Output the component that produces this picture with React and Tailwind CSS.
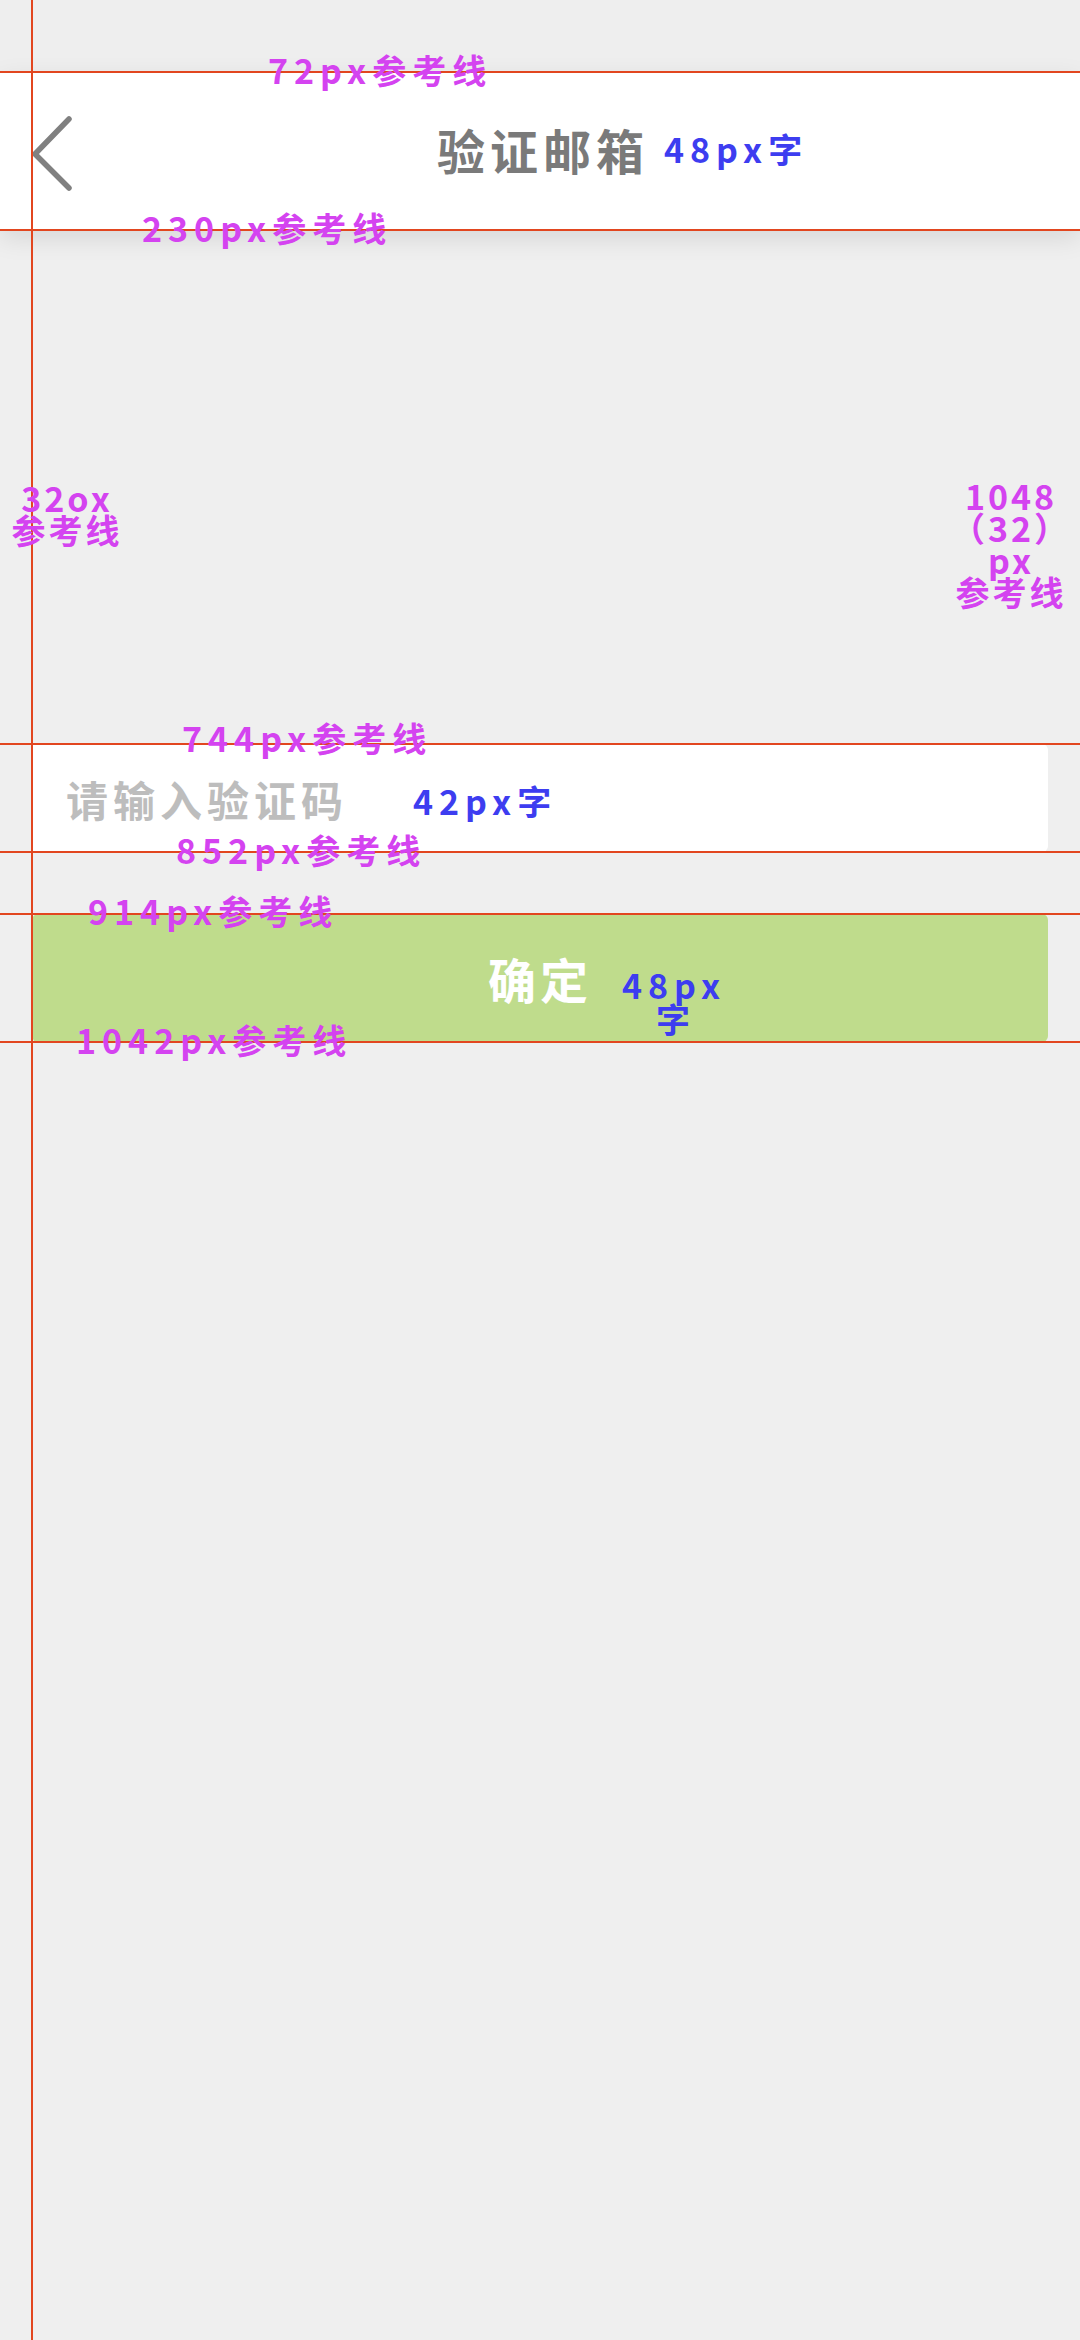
import React from 'react';

const cjk = { fontFamily: '"Noto Sans CJK SC", "Noto Sans", sans-serif' };

// design-spec overlay: guide lines + size labels
const guideRows = [72, 230, 744, 852, 914, 1042];

const labels = [
  { text: '72px参考线', left: 268, top: 52, color: 'text-[#d443f0]' },
  { text: '230px参考线', left: 142, top: 210, color: 'text-[#d443f0]' },
  { text: '48px字', left: 664, top: 131, color: 'text-[#3d3df0]' },
  { text: '744px参考线', left: 182, top: 720, color: 'text-[#d443f0]' },
  { text: '42px字', left: 413, top: 783, color: 'text-[#3d3df0]' },
  { text: '852px参考线', left: 176, top: 832, color: 'text-[#d443f0]' },
  { text: '914px参考线', left: 88, top: 893, color: 'text-[#d443f0]' },
  { text: '1042px参考线', left: 76, top: 1022, color: 'text-[#d443f0]' },
];

function Overlay() {
  return (
    <div className="pointer-events-none absolute inset-0 z-20" style={cjk}>
      {guideRows.map((y) => (
        <div key={y} className="absolute left-0 right-0 h-[2px] bg-[#e2461f]" style={{ top: y - 1 }} />
      ))}
      <div className="absolute top-0 bottom-0 left-[31px] w-[2px] bg-[#e2461f]" />

      {labels.map((l) => (
        <div
          key={l.text}
          className={`absolute text-[34px] font-bold leading-[36px] tracking-[6px] whitespace-nowrap ${l.color}`}
          style={{ left: l.left, top: l.top }}
        >
          {l.text}
        </div>
      ))}

      {/* button size note, wrapped in the source */}
      <div className="absolute left-[622px] top-[968px] w-[110px] text-[34px] font-bold leading-[34px] text-[#3d3df0]">
        <div className="tracking-[6px]">48px</div>
        <div className="pl-[34px]">字</div>
      </div>

      <div className="absolute left-[2px] top-[482px] w-[130px] text-center text-[34px] font-bold leading-[32px] tracking-[3px] text-[#d443f0]">
        <div>32ox</div>
        <div>参考线</div>
      </div>

      <div className="absolute left-[946px] top-[480px] w-[130px] text-center text-[34px] font-bold leading-[32px] tracking-[3px] text-[#d443f0]">
        <div>1048</div>
        <div>（32）</div>
        <div>px</div>
        <div>参考线</div>
      </div>
    </div>
  );
}

export default function App() {
  return (
    <div className="relative min-h-[2340px] w-[1080px] overflow-hidden bg-[#efefef]" style={cjk}>
      {/* status bar area */}
      <div className="h-[72px] bg-[#eeeeee]" />

      {/* header */}
      <div className="relative z-10 flex h-[158px] items-center bg-white shadow-[0_8px_24px_rgba(0,0,0,0.10)]">
        <button className="absolute left-[30px] top-0 flex h-[158px] w-[60px] items-center pt-[4px]">
          <svg width="46" height="78" viewBox="0 0 46 78" fill="none">
            <path d="M39 5 L5 40 L39 74" stroke="#808080" strokeWidth="5.5" strokeLinecap="round" strokeLinejoin="round" />
          </svg>
        </button>
        <h1 className="flex-1 pb-[4px] pl-[6px] text-center text-[48px] font-bold tracking-[5px] text-[#7a7a7a]">验证邮箱</h1>
      </div>

      {/* form */}
      <div className="flex flex-col px-[32px] pt-[514px]">
        <div className="flex h-[108px] items-center rounded-r-[6px] rounded-l-[2px] bg-white px-[34px]">
          <input
            className="w-full bg-transparent text-[42px] font-bold tracking-[5px] text-[#555] outline-none placeholder:text-[#bdbdbd]"
            placeholder="请输入验证码"
          />
        </div>
        <button className="mt-[62px] flex h-[128px] items-center justify-center rounded-[6px] bg-[#bfdc8c] text-[48px] font-bold tracking-[4px] text-white">
          确定
        </button>
      </div>

      <Overlay />
    </div>
  );
}
